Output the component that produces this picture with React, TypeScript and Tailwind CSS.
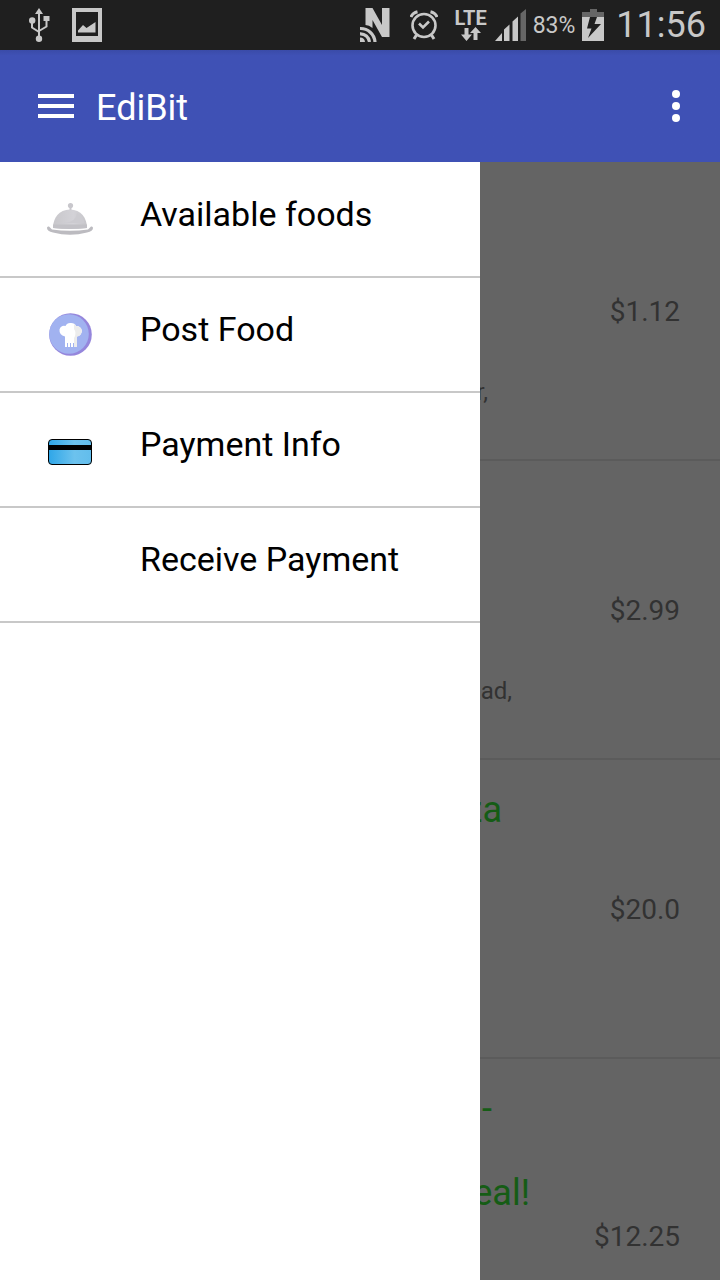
import React from 'react';

interface MenuItem {
  label: string;
  icon?: React.ReactNode;
}

interface Food {
  title?: string[];
  titleWidth?: string;
  price: string;
  description?: string;
  descriptionWidth?: string;
}

const UsbIcon = () => (
  <svg className="w-[21px] h-[34px]" viewBox="0 0 21 34" fill="none" stroke="#c8c8c8" strokeWidth="2">
    <path d="M10 5V29" />
    <path d="M3 13V19.500L10 24M17.500 10V18.500L10 23" />
    <path d="M10 0L14 6H6Z" fill="#c8c8c8" stroke="none" />
    <circle cx="3.200" cy="12.500" r="3.200" fill="#c8c8c8" stroke="none" />
    <rect x="14.500" y="8" width="6" height="5" fill="#c8c8c8" stroke="none" />
    <circle cx="10" cy="30.800" r="3.200" fill="#c8c8c8" stroke="none" />
  </svg>
);

const PictureIcon = () => (
  <svg className="w-[30px] h-[34px]" viewBox="0 0 30 34" fill="#c8c8c8">
    <path fillRule="evenodd" d="M0 0H30V34H0ZM4 4V28H26V4Z" />
    <path d="M6 24.500V22.500L11 17L14.500 20L23.500 14V24.500Z" />
  </svg>
);

const NfcIcon = () => (
  <svg className="w-[30px] h-[34px]" viewBox="0 0 30 34">
    <path d="M5.500 17V0H12.500L22 17V0H29.500V29H22L12.500 12V20Q9 17 5.500 17Z" fill="#c8c8c8" />
    <g fill="none" stroke="#c8c8c8" strokeWidth="3.200">
      <path d="M0 20.500A14.500 14.500 0 0 1 15 34" />
      <path d="M0 25.800A9 9 0 0 1 9.500 34" />
    </g>
    <path d="M0 29.500A5 5 0 0 1 5 34H0Z" fill="#c8c8c8" />
  </svg>
);

const AlarmIcon = () => (
  <svg className="w-7 h-[31px]" viewBox="0 0 28 31" fill="none" stroke="#c8c8c8" strokeWidth="2.600">
    <circle cx="14" cy="15.500" r="11.500" />
    <path d="M9 13.500L13 17.500L19 11.500" />
    <path d="M1 7Q2.500 3 7.500 1.800M27 7Q25.500 3 20.500 1.800" strokeWidth="3" />
    <path d="M6.500 25L4 29M21.500 25L24 29" strokeWidth="3" />
  </svg>
);

const DataArrows = () => (
  <svg className="w-5 h-[14px]" viewBox="0 0 20 14" fill="#c8c8c8">
    <path d="M3.500 1H7.500V7.500H11L5.500 14L0 7.500H3.500Z" />
    <path d="M12.500 13V6H9L14.500 0L20 6H16.500V13Z" />
  </svg>
);

const SignalIcon = () => (
  <svg className="w-[31px] h-8" viewBox="0 0 31 32" fill="#c8c8c8">
    <path d="M0 32L7 24V32Z" />
    <path d="M9 32V20.500L14.500 15.500V32Z" />
    <path d="M17.500 32V12.500L23 7.500V32Z" />
    <path d="M25.500 32V4.500L31 0V32Z" fill="#666" />
  </svg>
);

const BatteryIcon = () => (
  <svg className="w-[22px] h-8" viewBox="0 0 22 32">
    <path d="M8 0H15V3H22V8H0V3H8Z" fill="#666" />
    <path d="M0 8H22V32H0Z" fill="#c8c8c8" />
    <path d="M8 8H15L12.500 15H19L6 29L9.500 19.500H5Z" fill="#1f1f1f" />
  </svg>
);

const ClocheIcon = () => (
  <svg className="w-12 h-12" viewBox="0 0 48 48">
    <defs>
      <linearGradient id="dome" x1="0" y1="0" x2="1" y2="0">
        <stop offset="0" stopColor="#c8c7cb" />
        <stop offset="0.600" stopColor="#d3d2d7" />
        <stop offset="1" stopColor="#c6c5c9" />
      </linearGradient>
    </defs>
    <circle cx="24.500" cy="10.500" r="2.600" fill="#c8c7cc" />
    <path d="M23.500 12H25.500V16H23.500Z" fill="#c8c7cc" />
    <path d="M7 33C7 23 13 14.500 24 14.500S41 23 41 33Q24 35 7 33Z" fill="url(#dome)" />
    <path d="M7 29.500H41V33Q24 35 7 33Z" fill="#c2c1c6" />
    <path d="M18 28Q30 27 31 18Q37 20 38.500 28Z" fill="#cccbd0" />
    <path d="M1 33Q1 31 3 31.500L6 34.500Q24 37 42 34.500L45 31.500Q47 31 47 33Q47 36 41 37.500Q24 42 7 37.500Q1 36 1 33Z" fill="#bcbbc0" />
  </svg>
);

const ChefIcon = () => (
  <svg className="w-12 h-12" viewBox="0 0 48 48">
    <circle cx="24.500" cy="24.500" r="21.300" fill="#9586dc" />
    <circle cx="23" cy="24" r="19.800" fill="#a1b2f0" />
    <path d="M19 37V26.500Q13 25 13.500 19.500Q15 15 19.500 16Q21 12.500 25 13Q29 13 30 16Q35 16 36 21Q35 26 31 26.500V37Z" fill="#fff" />
    <path d="M28 14Q30 15 30 16Q35 16 36 21Q35 26 31 26.500V37H28V28Q31 23 28 19Z" fill="#ececec" />
    <path d="M21.500 37V33M24.500 37V33M27.500 37V33" stroke="#a1b2f0" />
  </svg>
);

const CardIcon = () => (
  <svg className="w-12 h-12" viewBox="0 0 48 48">
    <defs>
      <linearGradient id="card" x1="0" y1="0" x2="1" y2="0">
        <stop offset="0" stopColor="#2ea6e8" />
        <stop offset="0.600" stopColor="#6cc2ee" />
        <stop offset="1" stopColor="#62bdec" />
      </linearGradient>
    </defs>
    <rect x="2.500" y="14.500" width="43" height="25" rx="3.500" fill="url(#card)" stroke="#000" />
    <path d="M2.500 20H45.500V25H2.500Z" fill="#000" />
  </svg>
);

const menuItems: MenuItem[] = [
  { label: 'Available foods', icon: <ClocheIcon /> },
  { label: 'Post Food', icon: <ChefIcon /> },
  { label: 'Payment Info', icon: <CardIcon /> },
  { label: 'Receive Payment' },
];

const foods: Food[] = [
  { price: '$1.12', description: 'r,', descriptionWidth: 'w-2' },
  { price: '$2.99', description: 'ad,', descriptionWidth: 'w-8' },
  { title: ['za'], titleWidth: 'w-[22px]', price: '$20.0' },
  { title: ['-', '', 'eal!'], titleWidth: 'w-[50px]', price: '$12.25' },
];

const StatusBar = () => (
  <div className="h-[50px] shrink-0 bg-[#1f1f1f] text-[#c8c8c8] flex items-center justify-between pl-[29px] pr-[14px]">
    <div className="flex items-center gap-[22px]">
      <UsbIcon />
      <PictureIcon />
    </div>
    <div className="flex items-center">
      <NfcIcon />
      <div className="ml-5">
        <AlarmIcon />
      </div>
      <div className="ml-4 flex flex-col items-center">
        <span className="text-[20px] leading-[18px] font-bold">LTE</span>
        <DataArrows />
      </div>
      <div className="ml-2">
        <SignalIcon />
      </div>
      <span className="ml-[7px] pt-[2px] text-[23px] leading-7">83%</span>
      <div className="ml-[7px]">
        <BatteryIcon />
      </div>
      <span className="ml-3 text-[36px] leading-[42px]">11:56</span>
    </div>
  </div>
);

const AppBar = () => (
  <header className="h-28 shrink-0 bg-[#3f51b5] bg-linear-to-b from-[#3a4ba8] to-[#3f51b5] to-5% text-white flex items-center pl-[38px] pr-8">
    <button aria-label="Menu" className="flex flex-col gap-[6px] w-9">
      <span className="h-1 w-full bg-white" />
      <span className="h-1 w-full bg-white" />
      <span className="h-1 w-full bg-white" />
    </button>
    <h1 className="ml-[22px] pt-1 text-[36px] leading-[42px]">EdiBit</h1>
    <button aria-label="More options" className="ml-auto px-2 flex flex-col gap-1">
      <span className="size-2 rounded-full bg-white" />
      <span className="size-2 rounded-full bg-white" />
      <span className="size-2 rounded-full bg-white" />
    </button>
  </header>
);

const Drawer = () => (
  <nav className="w-2/3 bg-white">
    <ul className="pt-px">
      {menuItems.map((item) => (
        <li key={item.label} className="border-b-2 border-[#c8c8c8]">
          <a href="#" className="flex h-[113px] pt-8 pl-[46px] text-black">
            <span className="size-12 shrink-0">{item.icon}</span>
            <span className="ml-[46px] text-[34px] leading-[38px] whitespace-nowrap">{item.label}</span>
          </a>
        </li>
      ))}
    </ul>
  </nav>
);

const FoodRow: React.FC<{ food: Food }> = ({ food }) => (
  <li className="h-[299px] shrink-0 pt-[29px] border-b-2 border-[#5b5b5b] flex flex-col text-[#323232]">
    <div className={`min-h-[104px] pb-[6px] text-[36px] leading-[42px] text-[#155c15] overflow-hidden ${food.titleWidth || ''}`}>
      {food.title?.map((line, i) => (
        <div key={i} className={`h-[42px] flex whitespace-nowrap ${line === '-' ? 'pl-[2px]' : 'justify-end'}`}>{line}</div>
      ))}
    </div>
    <div className="pr-10 text-right text-[28px] leading-[33px]">{food.price}</div>
    {food.description && (
      <div className={`mt-[50px] flex justify-end overflow-hidden text-[24px] leading-7 ${food.descriptionWidth}`}>
        {food.description}
      </div>
    )}
  </li>
);

export default function App() {
  return (
    <div className="h-screen flex flex-col overflow-hidden font-['Roboto',sans-serif]">
      <StatusBar />
      <AppBar />
      <div className="flex flex-1 min-h-0">
        <Drawer />
        <main className="w-1/3 overflow-hidden bg-[#646464]">
          <ul className="flex flex-col">
            {foods.map((food) => (
              <FoodRow key={food.price} food={food} />
            ))}
          </ul>
        </main>
      </div>
    </div>
  );
}
